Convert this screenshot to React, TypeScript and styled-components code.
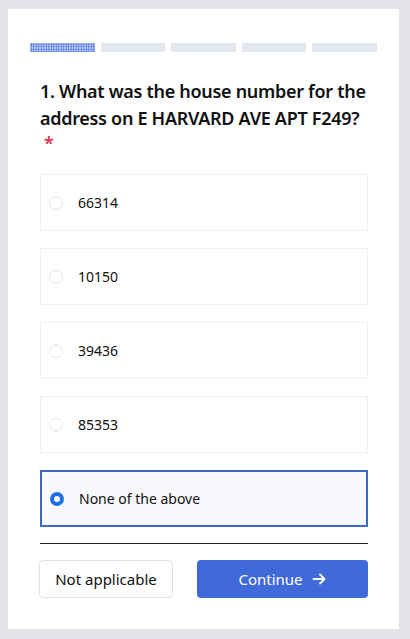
import styled, { createGlobalStyle } from 'styled-components';

const GlobalStyle = createGlobalStyle`
  html, body {
    margin: 0;
    padding: 0;
    background: #e4e5e9;
  }
  body {
    padding: 9px 0 10px 8px;
    font-family: "Noto Sans", "Open Sans", sans-serif;
    color: #111;
  }
`;

const Card = styled.div`
  width: 391px;
  height: 620px;
  box-sizing: border-box;
  background: #fff;
  padding: 34px 31px 0 32px;
  display: flex;
  flex-direction: column;
`;

const Progress = styled.div`
  display: flex;
  gap: 6px;
  margin: 0 -9px 0 -10px;
  height: 9px;
`;

const Segment = styled.div<{ $active?: boolean }>`
  flex: 1;
  background: ${(p) =>
    p.$active
      ? 'radial-gradient(circle, #5b7fe6 0.9px, #c9d6f8 1.1px) 0 0 / 2.5px 2.5px'
      : '#e3e8f0'};
`;

const Question = styled.h2`
  margin: 26px 0 0;
  font-size: 18px;
  font-weight: 600;
  line-height: 27px;
  letter-spacing: -0.3px;
  color: #111;
`;

const Required = styled.span`
  display: block;
  color: #e5364b;
  font-size: 18px;
  line-height: 22px;
  padding-left: 4px;
`;

const Options = styled.div`
  display: flex;
  flex-direction: column;
  gap: 17px;
  margin-top: 20px;
`;

const Option = styled.label<{ $selected?: boolean }>`
  height: 57px;
  box-sizing: border-box;
  display: flex;
  align-items: center;
  gap: 15px;
  padding-left: 8px;
  border: ${(p) => (p.$selected ? '2px solid #3f66c9' : '1px solid #eef0f3')};
  background: ${(p) => (p.$selected ? '#f8f9fd' : '#fff')};
  font-size: 14px;
  color: #111;
  cursor: pointer;
`;

const Radio = styled.span<{ $checked?: boolean }>`
  width: 14px;
  height: 14px;
  box-sizing: border-box;
  border-radius: 50%;
  border: ${(p) => (p.$checked ? '4.5px solid #1f6fe5' : '1px solid #e3e5e8')};
  background: #fff;
  flex-shrink: 0;
`;

const Divider = styled.hr`
  margin: 16px 0 0;
  border: none;
  border-top: 1px solid #222;
`;

const Actions = styled.div`
  display: flex;
  gap: 24px;
  margin-top: 16px;
`;

const Button = styled.button<{ $primary?: boolean }>`
  height: 38px;
  box-sizing: border-box;
  border-radius: 4px;
  font-family: inherit;
  font-size: 15px;
  display: flex;
  align-items: center;
  justify-content: center;
  gap: 8px;
  cursor: pointer;
  ${(p) =>
    p.$primary
      ? `
    flex: 1;
    background: #416ad9;
    border: none;
    color: #fff;
  `
      : `
    width: 134px;
    margin-left: -1px;
    background: #fff;
    border: 1px solid #e1e3e7;
    color: #111;
  `}
`;

const options = ['66314', '10150', '39436', '85353', 'None of the above'];

export default function App() {
  const selected = 'None of the above';
  return (
    <>
      <GlobalStyle />
      <Card>
        <Progress>
          <Segment $active />
          <Segment />
          <Segment />
          <Segment />
          <Segment />
        </Progress>
        <Question>
          1. What was the house number for the address on E HARVARD AVE APT F249?
          <Required>*</Required>
        </Question>
        <Options>
          {options.map((o) => (
            <Option key={o} $selected={o === selected}>
              <Radio $checked={o === selected} />
              {o}
            </Option>
          ))}
        </Options>
        <Divider />
        <Actions>
          <Button>Not applicable</Button>
          <Button $primary>
            Continue
            <svg width="16" height="16" viewBox="0 0 16 16" fill="none" stroke="#fff" strokeWidth="1.8" strokeLinecap="round" strokeLinejoin="round">
              <path d="M2.5 8h11M9 3.5 13.5 8 9 12.5" />
            </svg>
          </Button>
        </Actions>
      </Card>
    </>
  );
}
